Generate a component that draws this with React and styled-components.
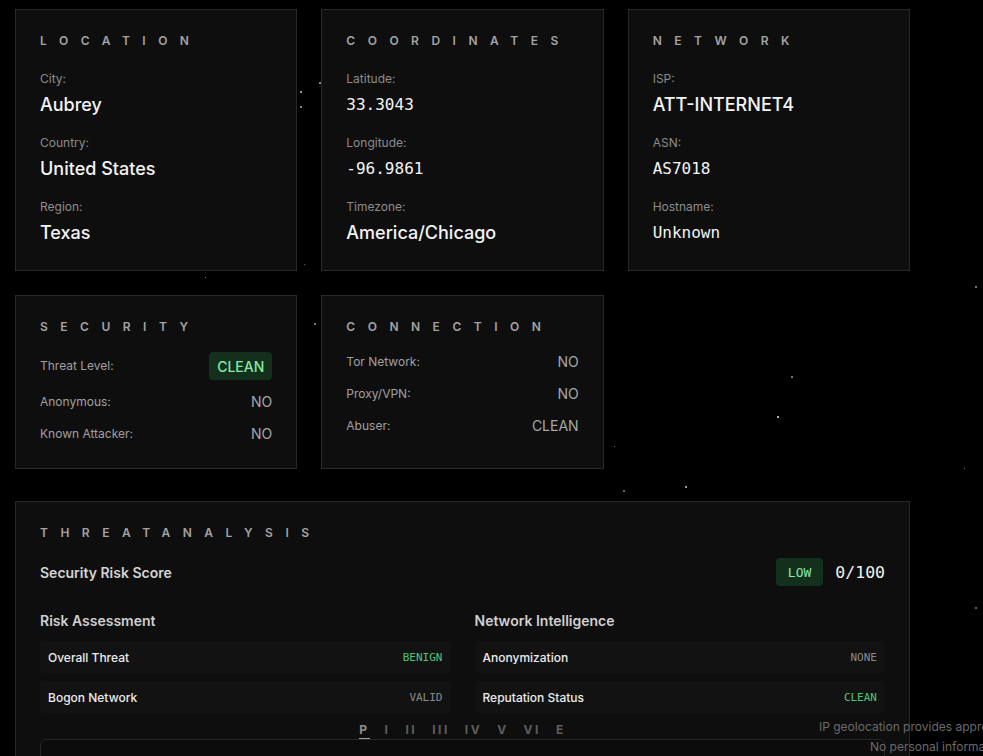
import React from "react";
import styled, { createGlobalStyle } from "styled-components";

const Global = createGlobalStyle`
  html, body {
    margin: 0;
    padding: 0;
    background: #000;
    overflow: hidden;
  }
  body {
    font-family: Inter, "Noto Sans", "Liberation Sans", sans-serif;
    color: #f2f2f2;
  }
  * { box-sizing: border-box; }
`;

const Page = styled.div`
  position: relative;
  min-height: 756px;
  padding: 9px 15px 0;
`;

const Container = styled.div`
  position: relative;
  z-index: 1;
  width: 895px;
`;

const Grid = styled.div`
  display: grid;
  grid-template-columns: repeat(3, 1fr);
  column-gap: 24px;
  row-gap: 24px;
`;

const Card = styled.section`
  background: #0e0e0e;
  border: 1px solid #282828;
  padding: 23px 24px ${(p) => p.$pb || 23}px;
`;

const Title = styled.h3`
  margin: 0 0 ${(p) => p.$mb || 16}px;
  font-size: 12px;
  line-height: 16px;
  font-weight: 600;
  letter-spacing: 12.5px;
  text-transform: uppercase;
  color: #a3a3a3;
`;

const Items = styled.div`
  display: flex;
  flex-direction: column;
  gap: 16px;
`;

const Item = styled.div`
  display: flex;
  flex-direction: column;
  gap: 4px;
`;

const Label = styled.span`
  font-size: 12px;
  line-height: 16px;
  color: #8c8c8c;
`;

const Value = styled.span`
  font-family: ${(p) =>
    p.$mono
      ? `"DejaVu Sans Mono", "Liberation Mono", monospace`
      : `Inter, "Noto Sans", sans-serif`};
  font-size: ${(p) => (p.$mono ? 16 : 18)}px;
  line-height: 28px;
  font-weight: ${(p) => (p.$mono ? 400 : 500)};
  color: #f4f4f4;
`;

const Rows = styled.div`
  display: flex;
  flex-direction: column;
  gap: 12px;
`;

const Row = styled.div`
  display: flex;
  align-items: center;
  justify-content: space-between;
  min-height: 20px;
`;

const RowLabel = styled.span`
  font-size: 12px;
  line-height: 20px;
  color: #a0a0a0;
`;

const RowValue = styled.span`
  font-size: 14px;
  line-height: 20px;
  color: #a8a8a8;
`;

const Badge = styled.span`
  display: inline-flex;
  align-items: center;
  height: 28px;
  padding: 0 ${(p) => (p.$mono ? 12 : 8)}px;
  border-radius: 4px;
  background: #13301d;
  color: #86e8a6;
  font-family: ${(p) =>
    p.$mono
      ? `"DejaVu Sans Mono", "Liberation Mono", monospace`
      : `Inter, "Noto Sans", sans-serif`};
  font-size: ${(p) => (p.$mono ? 13 : 14)}px;
  font-weight: 500;
`;

const WideCard = styled(Card)`
  margin-top: 32px;
  padding-bottom: 40px;
`;

const ScoreRow = styled.div`
  display: flex;
  align-items: center;
  justify-content: space-between;
  height: 28px;
  margin-top: 17px;
`;

const ScoreTitle = styled.span`
  font-size: 14px;
  font-weight: 600;
  color: #d4d4d4;
`;

const ScoreRight = styled.div`
  display: flex;
  align-items: center;
  gap: 12px;
`;

const Score = styled.span`
  font-family: "DejaVu Sans Mono", "Liberation Mono", monospace;
  font-size: 16.5px;
  color: #f2f2f2;
`;

const Columns = styled.div`
  display: grid;
  grid-template-columns: 1fr 1fr;
  column-gap: 24px;
  margin-top: 26px;
`;

const Column = styled.div`
  display: flex;
  flex-direction: column;
`;

const ColumnHead = styled.h4`
  margin: 0 0 11px;
  font-size: 14px;
  line-height: 18px;
  font-weight: 600;
  color: #d0d0d0;
`;

const InfoList = styled.div`
  display: flex;
  flex-direction: column;
  gap: 8px;
`;

const InfoRow = styled.div`
  display: flex;
  align-items: center;
  justify-content: space-between;
  height: 32px;
  padding: 0 8px;
  background: #121212;
  border-radius: 4px;
`;

const InfoLabel = styled.span`
  font-size: 12px;
  font-weight: 500;
  color: #ececec;
`;

const InfoValue = styled.span`
  font-family: "DejaVu Sans Mono", "Liberation Mono", monospace;
  font-size: 11px;
  color: ${(p) => (p.$ok ? "#4cc776" : "#8a8a8a")};
`;

const Tabs = styled.div`
  display: flex;
  justify-content: center;
  gap: 15px;
  margin-top: 9px;
`;

const Tab = styled.span`
  font-size: 12px;
  line-height: 16px;
  font-weight: 700;
  letter-spacing: 2.5px;
  color: ${(p) => (p.$active ? "#8e8e8e" : "#5e5e5e")};
  border-bottom: 1px solid ${(p) => (p.$active ? "#a0a0a0" : "transparent")};
`;

const Panel = styled.div`
  height: 140px;
  border: 1px solid #262626;
  border-radius: 6px;
  background: #0c0c0c;
`;

const Disclaimer = styled.div`
  position: absolute;
  z-index: 2;
  top: 717px;
  left: 819px;
  font-size: 12px;
  line-height: 20px;
  color: #6a6a6a;
  white-space: nowrap;
`;

const DisclaimerLine = styled.div`
  padding-left: ${(p) => p.$indent || 0}px;
`;

const Star = styled.span`
  position: absolute;
  z-index: 0;
  left: ${(p) => p.$x}px;
  top: ${(p) => p.$y}px;
  width: ${(p) => p.$s}px;
  height: ${(p) => p.$s}px;
  border-radius: 50%;
  background: #fff;
  opacity: ${(p) => p.$o};
`;

const stars = [
  [300, 91, 2, 0.8],
  [300, 106, 2, 0.7],
  [319, 82, 2, 0.7],
  [304, 264, 1, 0.5],
  [205, 277, 1, 0.6],
  [314, 323, 2, 0.6],
  [614, 446, 1, 0.6],
  [975, 286, 2, 0.6],
  [791, 376, 2, 0.6],
  [777, 416, 2, 0.9],
  [964, 468, 1, 0.6],
  [623, 490, 2, 0.5],
  [685, 486, 2, 0.8],
  [975, 607, 2, 0.5],
];

function InfoCard({ title, items }) {
  return (
    <Card>
      <Title $mb={22}>{title}</Title>
      <Items>
        {items.map((it) => (
          <Item key={it.label}>
            <Label>{it.label}</Label>
            <Value $mono={it.mono}>{it.value}</Value>
          </Item>
        ))}
      </Items>
    </Card>
  );
}

export default function App() {
  return (
    <>
      <Global />
      <Page>
        {stars.map(([x, y, s, o], i) => (
          <Star key={i} $x={x} $y={y} $s={s} $o={o} />
        ))}
        <Container>
          <Grid>
            <InfoCard
              title="Location"
              items={[
                { label: "City:", value: "Aubrey" },
                { label: "Country:", value: "United States" },
                { label: "Region:", value: "Texas" },
              ]}
            />
            <InfoCard
              title="Coordinates"
              items={[
                { label: "Latitude:", value: "33.3043", mono: true },
                { label: "Longitude:", value: "-96.9861", mono: true },
                { label: "Timezone:", value: "America/Chicago" },
              ]}
            />
            <InfoCard
              title="Network"
              items={[
                { label: "ISP:", value: "ATT-INTERNET4" },
                { label: "ASN:", value: "AS7018", mono: true },
                { label: "Hostname:", value: "Unknown", mono: true },
              ]}
            />
            <Card $pb={24}>
              <Title $mb={17}>Security</Title>
              <Rows>
                <Row>
                  <RowLabel>Threat Level:</RowLabel>
                  <Badge>CLEAN</Badge>
                </Row>
                <Row>
                  <RowLabel>Anonymous:</RowLabel>
                  <RowValue>NO</RowValue>
                </Row>
                <Row>
                  <RowLabel>Known Attacker:</RowLabel>
                  <RowValue>NO</RowValue>
                </Row>
              </Rows>
            </Card>
            <Card $pb={24}>
              <Title $mb={17}>Connection</Title>
              <Rows>
                <Row>
                  <RowLabel>Tor Network:</RowLabel>
                  <RowValue>NO</RowValue>
                </Row>
                <Row>
                  <RowLabel>Proxy/VPN:</RowLabel>
                  <RowValue>NO</RowValue>
                </Row>
                <Row>
                  <RowLabel>Abuser:</RowLabel>
                  <RowValue>CLEAN</RowValue>
                </Row>
              </Rows>
            </Card>
          </Grid>

          <WideCard>
            <Title>THREATANALYSIS</Title>
            <ScoreRow>
              <ScoreTitle>Security Risk Score</ScoreTitle>
              <ScoreRight>
                <Badge $mono>LOW</Badge>
                <Score>0/100</Score>
              </ScoreRight>
            </ScoreRow>
            <Columns>
              <Column>
                <ColumnHead>Risk Assessment</ColumnHead>
                <InfoList>
                  <InfoRow>
                    <InfoLabel>Overall Threat</InfoLabel>
                    <InfoValue $ok>BENIGN</InfoValue>
                  </InfoRow>
                  <InfoRow>
                    <InfoLabel>Bogon Network</InfoLabel>
                    <InfoValue>VALID</InfoValue>
                  </InfoRow>
                </InfoList>
              </Column>
              <Column>
                <ColumnHead>Network Intelligence</ColumnHead>
                <InfoList>
                  <InfoRow>
                    <InfoLabel>Anonymization</InfoLabel>
                    <InfoValue>NONE</InfoValue>
                  </InfoRow>
                  <InfoRow>
                    <InfoLabel>Reputation Status</InfoLabel>
                    <InfoValue $ok>CLEAN</InfoValue>
                  </InfoRow>
                </InfoList>
              </Column>
            </Columns>
            <Tabs>
              {["P", "I", "II", "III", "IV", "V", "VI", "E"].map((t, i) => (
                <Tab key={t} $active={i === 0}>
                  {t}
                </Tab>
              ))}
            </Tabs>
            <Panel />
          </WideCard>
        </Container>
        <Disclaimer>
          <DisclaimerLine>IP geolocation provides approximate location data only.</DisclaimerLine>
          <DisclaimerLine $indent={51}>No personal information is stored or shared.</DisclaimerLine>
        </Disclaimer>
      </Page>
    </>
  );
}
